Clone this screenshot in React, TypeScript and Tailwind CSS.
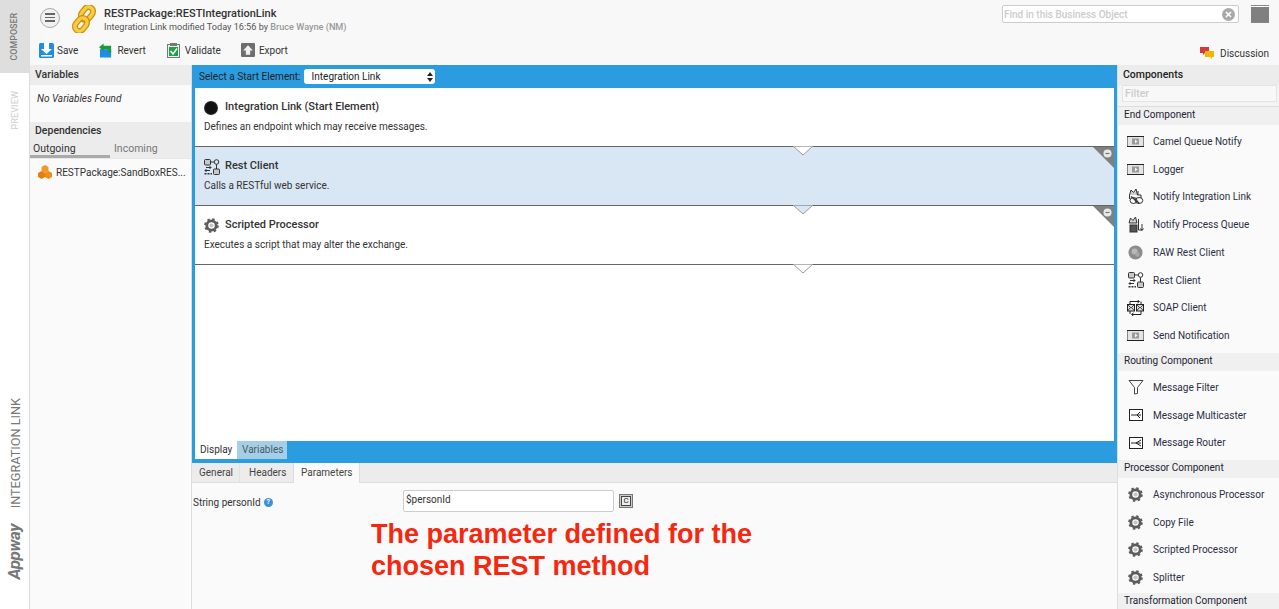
import React from "react";

const FONT = "[font-family:Roboto,'Liberation_Sans',sans-serif]";

function Gear() {
  return (
    <svg width="15" height="15" viewBox="0 0 16 16">
      <circle cx="8" cy="8" r="5" fill="none" stroke="#5c5c5c" strokeWidth="3" />
      <circle cx="8" cy="8" r="6.8" fill="none" stroke="#5c5c5c" strokeWidth="2" strokeDasharray="2.6 2.74" />
      <circle cx="8" cy="8" r="2.2" fill="#c4c4c4" />
    </svg>
  );
}

function Envelope() {
  return (
    <svg width="17" height="11" viewBox="0 0 17 11">
      <rect x="0.5" y="0.5" width="16" height="10" fill="#e4e4e4" stroke="#888" />
      <path d="M0 0.5 H17 M0 10.5 H17" stroke="#222" />
      <rect x="5" y="2.5" width="7" height="6" fill="#9a9a9a" />
      <path d="M8 3.5 L10.5 5.5 L8 7.5 Z" fill="#f4f4f4" />
    </svg>
  );
}

function RestIcon() {
  return (
    <svg width="16" height="16" viewBox="0 0 16 16" fill="none" stroke="#333" strokeWidth="1">
      <rect x="0.5" y="0.5" width="6" height="5.5" rx="1" fill="#c8c8c8" />
      <circle cx="12.5" cy="3" r="2.3" />
      <path d="M6.5 3 H10.2 M12.5 5.3 V10" />
      <path d="M2 8.5 H7 M5.5 7 L7 8.5 L5.5 10 M6 11.5 H1 M2.5 10 L1 11.5 L2.5 13" />
      <rect x="9.5" y="10" width="6" height="5.5" rx="1" fill="#c8c8c8" />
      <path d="M0.5 14.8 H8" strokeDasharray="2 1" strokeWidth="1.4" />
    </svg>
  );
}

function NotifyLink() {
  return (
    <svg width="16" height="17" viewBox="0 0 16 17" fill="none" stroke="#333" strokeWidth="1">
      <path d="M1.5 7 L3 2 L5.5 4.5 L8 1 L9.5 7" fill="#d0d0d0" />
      <path d="M10 3 V7 M1.5 7 V11 M9.5 7 H13 V10" />
      <ellipse cx="5.5" cy="12.5" rx="3.5" ry="3" />
      <ellipse cx="11" cy="12.5" rx="3.8" ry="3" />
      <path d="M3 8.5 L11 15" strokeWidth="1.5" />
    </svg>
  );
}

function NotifyQueue() {
  return (
    <svg width="16" height="17" viewBox="0 0 16 17" fill="none" stroke="#333" strokeWidth="1">
      <path d="M1 7 L2.5 2 L5 4.5 L7.5 1 L9 7 Z" fill="#d0d0d0" />
      <path d="M10.5 3 V14 H14 M14 8 V14 M12.5 12.5 L14 14.5 L15.5 12.5" />
      <rect x="2" y="9" width="7" height="7" fill="#555" stroke="#333" />
    </svg>
  );
}

function RawIcon() {
  return (
    <svg width="15" height="15" viewBox="0 0 16 16">
      <circle cx="8" cy="8" r="7.5" fill="#8c8c8c" />
      <circle cx="7" cy="7" r="3.2" fill="#b8b8b8" />
      <circle cx="10" cy="10" r="2.4" fill="#a6a6a6" />
    </svg>
  );
}

function SoapIcon() {
  return (
    <svg width="17" height="16" viewBox="0 0 17 16" fill="none" stroke="#222" strokeWidth="1">
      <path d="M3 4.5 V1.5 H12 M10.5 0 L12.5 1.5 L10.5 3 M14 1.5 V4.5 M14 11 V14.5 H5 M6.5 13 L4.5 14.5 L6.5 16 M3 11 V14" />
      <rect x="0.5" y="4.5" width="7" height="6.5" fill="#ddd" />
      <rect x="9.5" y="4.5" width="7" height="6.5" fill="#ddd" />
      <path d="M0.5 4.5 L4 8 L7.5 4.5 M9.5 4.5 L13 8 L16.5 4.5 M0.5 11 L3 8 M7.5 11 L5 8 M9.5 11 L12 8 M16.5 11 L14 8" strokeWidth="0.8" />
    </svg>
  );
}

function FilterIcon() {
  return (
    <svg width="16" height="16" viewBox="0 0 16 16" fill="none" stroke="#444" strokeWidth="1">
      <path d="M1 1.5 H15 L9.5 8.5 V14.5 L6.5 15 V8.5 Z" fill="#fff" />
    </svg>
  );
}

function RouterIcon({ multi }: { multi?: boolean }) {
  return (
    <svg width="14" height="12" viewBox="0 0 14 12" fill="none" stroke="#222" strokeWidth="1">
      <rect x="0.5" y="0.5" width="13" height="11" fill="#fff" />
      <path d={multi ? "M2 6 H8 M8 6 L11 3 M8 6 L11 9 M8 6 H12" : "M2 6 H7 M7 6 L12 3 M7 6 L12 9 M7 6 H12"} />
    </svg>
  );
}

type Item = { name: string; icon: React.ReactNode };

const END_ITEMS: Item[] = [
  { name: "Camel Queue Notify", icon: <Envelope /> },
  { name: "Logger", icon: <Envelope /> },
  { name: "Notify Integration Link", icon: <NotifyLink /> },
  { name: "Notify Process Queue", icon: <NotifyQueue /> },
  { name: "RAW Rest Client", icon: <RawIcon /> },
  { name: "Rest Client", icon: <RestIcon /> },
  { name: "SOAP Client", icon: <SoapIcon /> },
  { name: "Send Notification", icon: <Envelope /> },
];
const ROUTING_ITEMS: Item[] = [
  { name: "Message Filter", icon: <FilterIcon /> },
  { name: "Message Multicaster", icon: <RouterIcon multi /> },
  { name: "Message Router", icon: <RouterIcon /> },
];
const PROCESSOR_ITEMS: Item[] = [
  { name: "Asynchronous Processor", icon: <Gear /> },
  { name: "Copy File", icon: <Gear /> },
  { name: "Scripted Processor", icon: <Gear /> },
  { name: "Splitter", icon: <Gear /> },
];

function PaletteGroup({ title, items, bodyClass }: { title: string; items: Item[]; bodyClass: string }) {
  return (
    <div>
      <div className="h-[18px] bg-[#f0f0f0] pl-[6px] text-[10px] leading-[16px] text-[#223]">{title}</div>
      <div className={bodyClass}>
        {items.map((it) => (
          <div key={it.name} className="flex h-[27.75px] items-center text-[10px] text-[#2b2f45]">
            <div className="flex w-[35px] shrink-0 justify-center">{it.icon}</div>
            <span>{it.name}</span>
          </div>
        ))}
      </div>
    </div>
  );
}

function Notch({ fill }: { fill: string }) {
  return (
    <svg width="20" height="10" viewBox="0 0 20 10" className="absolute left-[598px] top-[-1px] z-10">
      <path d="M0 0.5 H20 L10 9 Z" fill={fill} stroke="none" />
      <path d="M0 0 L10 9 L20 0" fill="none" stroke="#999" strokeWidth="1" />
    </svg>
  );
}

function Corner() {
  return (
    <svg width="21" height="21" viewBox="0 0 21 21" className="absolute right-0 top-0">
      <path d="M0 0 H21 V21 Z" fill="#808080" />
      <circle cx="14.5" cy="6.5" r="4" fill="#e8e8e8" />
      <path d="M12.5 6.5 H16.5" stroke="#777" strokeWidth="1.2" />
    </svg>
  );
}

function FlowRow({
  title,
  desc,
  icon,
  active,
  notchFill,
  removable,
}: {
  title: string;
  desc: string;
  icon: React.ReactNode;
  active?: boolean;
  notchFill: string;
  removable?: boolean;
}) {
  return (
    <div className={`relative h-[59px] border-b border-[#666] pl-[9px] ${active ? "bg-[#d9e6f3]" : "bg-white"}`}>
      {removable && <Corner />}
      <div className="flex h-[33px] items-center gap-[5px] pt-[6px]">
        <div className="flex w-[16px] justify-start">{icon}</div>
        <span className="text-[11px] font-medium text-[#333]">{title}</span>
      </div>
      <div className="text-[10px] leading-[12px] text-[#333]">{desc}</div>
      <div className="absolute bottom-[-1px] left-0 z-10 h-0 w-full">
        <Notch fill={notchFill} />
      </div>
    </div>
  );
}

function Toolbar() {
  return (
    <div className="flex h-[30px] items-center pl-[9px] text-[10px] text-[#333]">
      <div className="flex items-center gap-[3px]">
        <svg width="15" height="15" viewBox="0 0 15 15">
          <rect width="15" height="15" rx="1.5" fill="#1f8ee0" />
          <path d="M5 0 H10 V6 H13 L7.5 11 L2 6 H5 Z" fill="#fff" />
          <rect x="2" y="12" width="11" height="1.5" fill="#fff" />
        </svg>
        <span>Save</span>
      </div>
      <div className="ml-[21px] flex items-center gap-[4px]">
        <svg width="14" height="15" viewBox="0 0 15 15">
          <rect x="1" y="6" width="12" height="9" fill="#1f8ee0" />
          <path d="M0 4 L5 0 V2.5 H13 V10 H10 V6 H5 V8 Z" fill="#1c9a3a" />
        </svg>
        <span>Revert</span>
      </div>
      <div className="ml-[21px] flex items-center gap-[5px]">
        <svg width="13" height="15" viewBox="0 0 13 15">
          <rect x="0.5" y="1.5" width="12" height="13" fill="#eee" stroke="#777" />
          <rect x="3" y="0" width="7" height="3" fill="#777" />
          <rect x="2" y="4" width="9" height="9" fill="#1fa14a" />
          <path d="M3.5 8 L6 11 L10 5.5" fill="none" stroke="#fff" strokeWidth="1.4" />
        </svg>
        <span>Validate</span>
      </div>
      <div className="ml-[20px] flex items-center gap-[4px]">
        <svg width="14" height="14" viewBox="0 0 13 13">
          <rect width="13" height="13" rx="1" fill="#6f6f6f" />
          <path d="M6.5 2 L11 7 H8.5 V11 H4.5 V7 H2 Z" fill="#f2f2f2" />
        </svg>
        <span>Export</span>
      </div>
      <div className="ml-auto mr-[10px] flex translate-y-[3px] items-center gap-[4px]">
        <svg width="16" height="12" viewBox="0 0 16 12">
          <path d="M0 0 H9 V6 H5 L3 8 V6 H0 Z" fill="#d13b3b" />
          <path d="M5 4 H14 V10 H12 V12 L10 10 H5 Z" fill="#f5b400" />
        </svg>
        <span>Discussion</span>
      </div>
    </div>
  );
}

function Header() {
  return (
    <div className="h-[65px] bg-[#f8f8f8]">
      <div className="flex h-[35px] items-center">
        <div className="ml-[10px] flex h-[20px] w-[20px] items-center justify-center rounded-full border-[1.5px] border-[#aaa] bg-[#f0f0f0]">
          <div className="flex flex-col gap-[2px]">
            <div className="h-[1.5px] w-[10px] bg-[#666]" />
            <div className="h-[1.5px] w-[10px] bg-[#666]" />
            <div className="h-[1.5px] w-[10px] bg-[#666]" />
          </div>
        </div>
        <svg width="26" height="28" viewBox="0 0 26 28" className="ml-[11px] mt-[3px]">
          <g fill="none">
            <rect x="11.5" y="1.5" width="9" height="14" rx="4.5" transform="rotate(38 16 8.5)" stroke="#cf8f0a" strokeWidth="6" />
            <rect x="11.5" y="1.5" width="9" height="14" rx="4.5" transform="rotate(38 16 8.5)" stroke="#f7cc45" strokeWidth="3.5" />
            <rect x="5.5" y="12.5" width="9" height="14" rx="4.5" transform="rotate(38 10 19.5)" stroke="#cf8f0a" strokeWidth="6" />
            <rect x="5.5" y="12.5" width="9" height="14" rx="4.5" transform="rotate(38 10 19.5)" stroke="#f7cc45" strokeWidth="3.5" />
          </g>
        </svg>
        <div className="ml-[7px] mt-[5px]">
          <div className="text-[11px] font-medium leading-[14px] text-[#333]">RESTPackage:RESTIntegrationLink</div>
          <div className="text-[9.15px] leading-[13px] text-[#555]">
            Integration Link modified Today 16:56 by <span className="font-medium text-[#999]">Bruce Wayne (NM)</span>
          </div>
        </div>
        <div className="ml-auto mt-[5px] flex h-[18px] w-[237px] items-center justify-between self-start rounded-[2px] border border-[#ccc] bg-white pl-[1px] pr-[3px] text-[10px] font-medium text-[#ccc]">
          <span>Find in this Business Object</span>
          <svg width="13" height="13" viewBox="0 0 13 13">
            <circle cx="6.5" cy="6.5" r="6.5" fill="#aaa" />
            <path d="M4 4 L9 9 M9 4 L4 9" stroke="#fff" strokeWidth="1.6" />
          </svg>
        </div>
        <div className="ml-[12px] mr-[10px] mt-[5px] h-[18px] w-[18px] self-start border-y border-[#888] bg-[#808080] shadow-[inset_0_1px_0_#fff]" />
      </div>
      <Toolbar />
    </div>
  );
}

function Rail() {
  return (
    <div className="flex w-[30px] shrink-0 flex-col border-r border-[#ddd] bg-white">
      <div className="flex h-[73px] items-center justify-center bg-[#dedede]">
        <span className="rotate-180 text-[8.9px] font-medium text-[#777] [writing-mode:vertical-rl]">COMPOSER</span>
      </div>
      <div className="flex h-[72px] items-center justify-center pt-[2px]">
        <span className="rotate-180 text-[9.2px] font-medium text-[#d5d5d5] [writing-mode:vertical-rl]">PREVIEW</span>
      </div>
      <div className="mt-auto flex flex-col items-center pb-[30px]">
        <span className="translate-x-[1px] rotate-180 text-[12.7px] text-[#777] [writing-mode:vertical-rl]">INTEGRATION LINK</span>
        <span className="mt-[15px] rotate-180 text-[17px] font-bold italic tracking-[-0.5px] text-[#777] [writing-mode:vertical-rl]">Appway</span>
      </div>
    </div>
  );
}

function LeftPanel() {
  return (
    <div className="w-[162px] shrink-0 border-r border-[#ddd] bg-[#fafafa]">
      <div className="h-[20px] bg-[#ececec] pl-[5px] text-[10.5px] font-medium leading-[19px] text-[#333]">Variables</div>
      <div className="h-[37px] pl-[7px] pt-[8px] text-[10px] italic leading-[12px] text-[#333]">No Variables Found</div>
      <div className="h-[19px] bg-[#ececec] pl-[5px] text-[10.5px] font-medium leading-[18px] text-[#333]">Dependencies</div>
      <div className="flex h-[18px] border-b border-[#e8e8e8] bg-[#ececec] text-[10.5px] leading-[15px]">
        <div className="w-[80px] border-b-[3px] border-[#aaa] pl-[3px] text-[#333]">Outgoing</div>
        <div className="pl-[4px] text-[#777]">Incoming</div>
      </div>
      <div className="flex h-[26px] items-center pl-[8px] text-[10px] text-[#333]">
        <svg width="14" height="14" viewBox="0 0 14 14" className="mr-[4px]">
          <path d="M7 0 L10.5 2 V6 L7 8 L3.5 6 V2 Z" fill="#f09a20" />
          <path d="M3.5 6 L7 8 V12 L3.5 14 L0 12 V8 Z" fill="#e57f10" />
          <path d="M10.5 6 L14 8 V12 L10.5 14 L7 12 V8 Z" fill="#ee8d18" />
        </svg>
        <span>RESTPackage:SandBoxRES...</span>
      </div>
    </div>
  );
}

function Center() {
  return (
    <div className="flex w-[925px] shrink-0 flex-col">
      <div className="flex h-[23px] items-center bg-[#2b9ce0] pl-[7px] text-[10.1px] text-[#222]">
        <span>Select a Start Element:</span>
        <div className="ml-[3px] flex h-[15px] w-[131px] items-center justify-between rounded-[3px] bg-white pl-[8px] pr-[2px] text-[10px]">
          <span>Integration Link</span>
          <svg width="6" height="10" viewBox="0 0 6 10">
            <path d="M3 0 L6 4 H0 Z M3 10 L0 6 H6 Z" fill="#222" />
          </svg>
        </div>
      </div>
      <div className="h-[353px] bg-[#2b9ce0] px-[3px]">
        <div className="h-full bg-white">
          <FlowRow
            title="Integration Link (Start Element)"
            desc="Defines an endpoint which may receive messages."
            icon={<div className="h-[14px] w-[14px] rounded-full bg-[radial-gradient(circle,#111_55%,#777_100%)]" />}
            notchFill="#ffffff"
          />
          <FlowRow
            title="Rest Client"
            desc="Calls a RESTful web service."
            icon={<RestIcon />}
            active
            notchFill="#d9e6f3"
            removable
          />
          <FlowRow
            title="Scripted Processor"
            desc="Executes a script that may alter the exchange."
            icon={<Gear />}
            notchFill="#ffffff"
            removable
          />
        </div>
      </div>
      <div className="h-[22px] bg-[#2b9ce0] pl-[3px]">
        <div className="flex h-[18px] text-[10px] leading-[18px]">
          <div className="w-[42px] bg-white pl-[5px] text-[#333]">Display</div>
          <div className="w-[50px] bg-[#a5cfe6] pl-[5px] text-[#4a5a66]">Variables</div>
        </div>
      </div>
      <div className="flex h-[20px] border-b border-[#ddd] bg-[#ececec] text-[10px] leading-[20px] text-[#444]">
        <div className="w-[48px] border-r border-[#e2e2e2] pl-[7px]">General</div>
        <div className="w-[53px] pl-[9px]">Headers</div>
        <div className="h-[20px] w-[67px] border-x border-[#ddd] bg-[#fafafa] pl-[7px]">Parameters</div>
      </div>
      <div className="flex-1 bg-[#fafafa] text-[10px] text-[#333]">
        <div className="flex items-start pt-[7px]">
          <div className="flex w-[211px] items-center gap-[3px] pl-[1px] pt-[5px]">
            <span>String personId</span>
            <div className="flex h-[9px] w-[9px] items-center justify-center rounded-full bg-[#3b93d6] text-[7px] font-bold leading-none text-white">?</div>
          </div>
          <div className="flex h-[22px] w-[211px] items-start rounded-[2px] border border-[#ccc] bg-white pl-[2px] pt-[1px] text-[10px]">
            $personId
          </div>
          <div className="ml-[5px] mt-[4px] flex h-[14px] w-[14px] items-center justify-center border border-[#777] bg-[#ccc] text-[8px] leading-none text-[#222]">
            <div className="flex h-[10px] w-[10px] items-center justify-center border border-[#444] bg-[#eee]">C</div>
          </div>
        </div>
        <div className="ml-[179px] mt-[6px] [font-family:'Liberation_Sans',Arial,sans-serif] text-[27px] font-bold leading-[32px] text-[#f5280f]">
          The parameter defined for the
          <br />
          chosen REST method
        </div>
      </div>
    </div>
  );
}

function RightPanel() {
  return (
    <div className="h-[544px] w-[162px] shrink-0 overflow-hidden border-l-[1px] border-[#ddd] bg-[#fafafa]">
      <div className="h-[20px] bg-[#ececec] pl-[5px] text-[10.5px] font-medium leading-[19px] text-[#222]">Components</div>
      <div className="h-[21px] bg-[#f4f4f4] pl-[4px] pr-[2px]">
        <div className="h-[17px] border border-[#e4e4e4] bg-[#f8f8f8] pl-[2px] text-[10.5px] font-medium leading-[15px] text-[#ccc]">Filter</div>
      </div>
      <div className="border-t border-[#ddd]">
        <PaletteGroup title="End Component" items={END_ITEMS} bodyClass="pb-[3.6px] pt-[2.4px]" />
        <PaletteGroup title="Routing Component" items={ROUTING_ITEMS} bodyClass="pb-[3.6px] pt-[2.4px]" />
        <PaletteGroup title="Processor Component" items={PROCESSOR_ITEMS} bodyClass="pb-[1.6px] pt-[2.4px]" />
        <PaletteGroup title="Transformation Component" items={[]} bodyClass="" />
      </div>
    </div>
  );
}

export default function App() {
  return (
    <div className={`flex h-[609px] w-[1279px] overflow-hidden bg-white ${FONT}`}>
      <Rail />
      <div className="flex min-w-0 flex-1 flex-col">
        <Header />
        <div className="flex min-h-0 flex-1">
          <LeftPanel />
          <Center />
          <RightPanel />
        </div>
      </div>
    </div>
  );
}
